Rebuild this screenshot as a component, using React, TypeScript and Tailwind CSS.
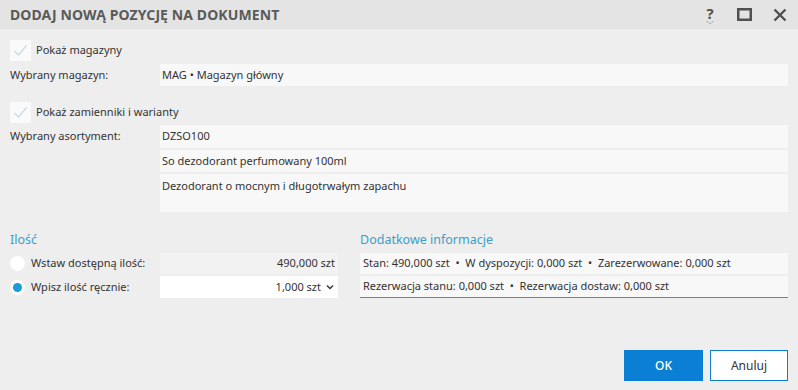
import React from 'react'

const Check = () => (
  <div className="w-[21px] h-[21px] bg-[#fafafa] flex items-center justify-center shrink-0">
    <svg width="15" height="13" viewBox="0 0 15 13" fill="none">
      <path d="M1.5 7 L5.5 11 L13.5 1.5" stroke="#c8dce8" strokeWidth="1.3" />
    </svg>
  </div>
)

const Field = ({ children, className = '' }: { children?: React.ReactNode; className?: string }) => (
  <div className={`bg-[#f8f8f8] px-[2px] flex ${className}`}>{children}</div>
)

export default function App() {
  return (
    <div
      className="w-[798px] h-[390px] bg-[#eeeeee] text-[#333333] text-[11px] flex flex-col"
      style={{ fontFamily: '"Noto Sans", "Open Sans", sans-serif' }}
    >
      {/* Title bar */}
      <div className="h-[29px] bg-[#e4e4e4] flex items-center pl-[10px] pr-[11px] shrink-0">
        <div className="font-bold text-[14px] text-[#5a5a5a] tracking-[0.1px] flex-1">DODAJ NOWĄ POZYCJĘ NA DOKUMENT</div>
        <div className="flex items-center text-[#505050]">
          <div className="w-[10px] h-[20px] flex flex-col items-center mr-[22px]">
            <span className="font-bold text-[15px] leading-[16px]">?</span>
            <svg width="8" height="4" viewBox="0 0 8 4">
              <path d="M1 0.5 Q4 4 7 0.5" fill="none" stroke="#707070" strokeWidth="1" strokeDasharray="1 1" />
            </svg>
          </div>
          <svg width="15" height="13" viewBox="0 0 15 13" className="mr-[21px]">
            <rect x="1.25" y="1.25" width="12.5" height="10.5" fill="none" stroke="#505050" strokeWidth="2.5" />
          </svg>
          <svg width="14" height="14" viewBox="0 0 14 14">
            <path d="M1.5 1.5 L12.5 12.5 M12.5 1.5 L1.5 12.5" stroke="#505050" strokeWidth="2.4" />
          </svg>
        </div>
      </div>

      {/* Body */}
      <div className="flex-1 flex flex-col px-[10px]">
        <div className="flex items-center gap-[5px] mt-[11px] h-[21px]">
          <Check />
          <span>Pokaż magazyny</span>
        </div>
        <div className="flex mt-[3px] h-[22px]">
          <div className="w-[150px] flex items-center">Wybrany magazyn:</div>
          <Field className="flex-1 items-center">MAG • Magazyn główny</Field>
        </div>

        <div className="flex items-center gap-[5px] mt-[16px] h-[21px]">
          <Check />
          <span>Pokaż zamienniki i warianty</span>
        </div>
        <div className="flex mt-[2px]">
          <div className="w-[150px] h-[22px] flex items-center">Wybrany asortyment:</div>
          <div className="flex-1 flex flex-col gap-[2px]">
            <Field className="h-[23px] items-center">DZSO100</Field>
            <Field className="h-[22px] items-center">So dezodorant perfumowany 100ml</Field>
            <Field className="h-[38px] items-start pt-[4px]">Dezodorant o mocnym i długotrwałym zapachu</Field>
          </div>
        </div>

        <div className="flex mt-[18px] gap-[22px]">
          {/* Ilość */}
          <div className="w-[328px] flex flex-col">
            <div className="text-[#3a9fc9] text-[12.5px] h-[20px] leading-[20px]">Ilość</div>
            <div className="flex mt-[3px] h-[21px]">
              <div className="w-[150px] flex items-center gap-[6px]">
                <div className="w-[15px] h-[15px] rounded-full bg-white" />
                <span>Wstaw dostępną ilość:</span>
              </div>
              <div className="flex-1 bg-[#f2f2f2] flex items-center justify-end pr-[3px]">490,000 szt</div>
            </div>
            <div className="flex mt-[2px] h-[22px]">
              <div className="w-[150px] flex items-center gap-[6px]">
                <div className="w-[15px] h-[15px] rounded-full bg-white flex items-center justify-center">
                  <div className="w-[9px] h-[9px] rounded-full bg-[#1c9bd6]" />
                </div>
                <span>Wpisz ilość ręcznie:</span>
              </div>
              <div className="flex-1 bg-white flex items-center justify-end pr-[4px] gap-[5px]">
                <span>1,000 szt</span>
                <svg width="8" height="6" viewBox="0 0 8 6">
                  <path d="M1 1.5 L4 4.5 L7 1.5" fill="none" stroke="#333" strokeWidth="1.4" />
                </svg>
              </div>
            </div>
          </div>

          {/* Dodatkowe informacje */}
          <div className="flex-1 flex flex-col">
            <div className="text-[#3a9fc9] text-[12.5px] h-[20px] leading-[20px]">Dodatkowe informacje</div>
            <Field className="mt-[3px] h-[21px] items-center pl-[3px]">
              Stan: 490,000 szt&nbsp; •&nbsp; W dyspozycji: 0,000 szt&nbsp; •&nbsp; Zarezerwowane: 0,000 szt
            </Field>
            <Field className="mt-[2px] h-[22px] items-center pl-[3px] border-b-[1.5px] border-[#2a9ad3]">
              Rezerwacja stanu: 0,000 szt&nbsp; •&nbsp; Rezerwacja dostaw: 0,000 szt
            </Field>
          </div>
        </div>

        <div className="flex-1" />
        <div className="flex justify-end gap-[7px] mb-[9px]">
          <button className="w-[79px] h-[31px] bg-[#0b7fd3] text-white text-[12px] font-medium">OK</button>
          <button className="w-[78px] h-[31px] bg-white border border-[#0b7fd3] text-[#333] text-[12px]">Anuluj</button>
        </div>
      </div>
    </div>
  )
}
